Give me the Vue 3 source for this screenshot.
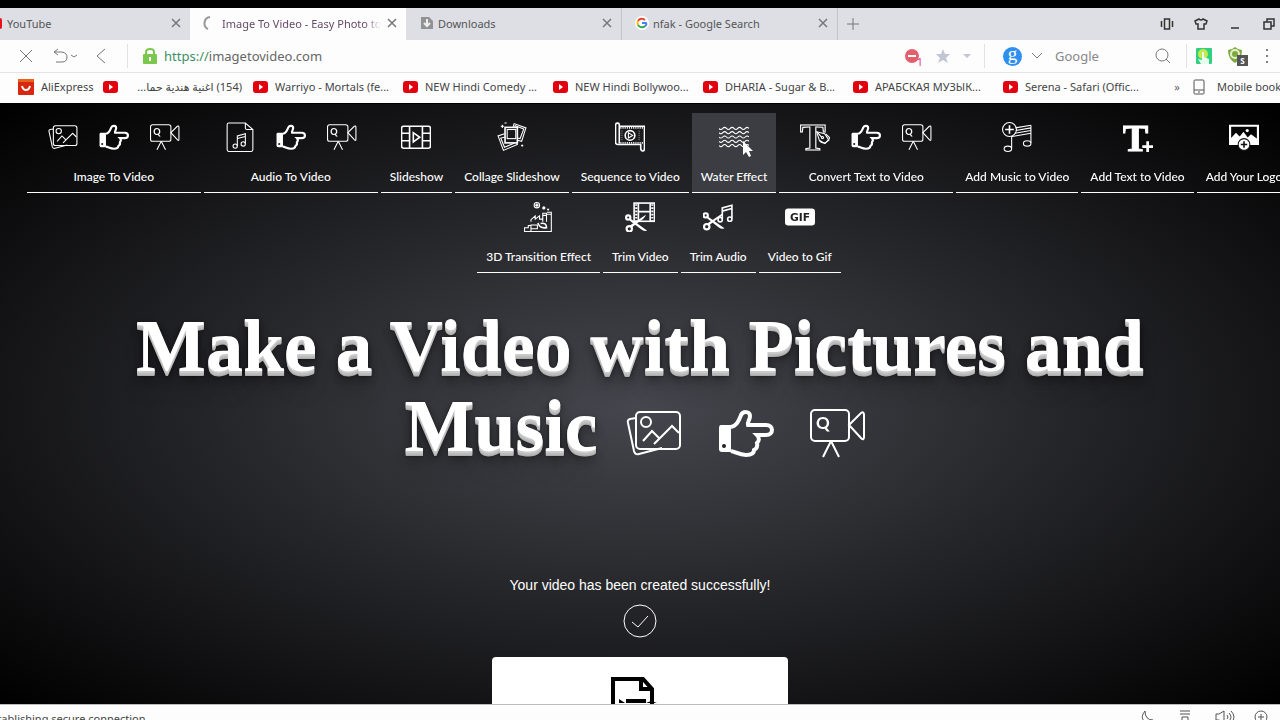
<template>
  <div class="browser">
    <svg class="sprite" aria-hidden="true">
      <symbol id="pictures" viewBox="0 0 56 56">
        <path d="M10 13 4 14Q1 15 2 18L8 46Q9 50 13 49L36 43" />
        <rect x="10" y="7" width="44" height="37" rx="4" />
        <circle cx="20" cy="17" r="5" />
        <path d="M17 36 26 26 33 33M28 39 46 21 53 28" />
      </symbol>
      <symbol id="hand" viewBox="0 0 56 56">
        <path class="solid" d="M3 20H13V47H4Q1 47 1 44V23Q1 20 3 20Z" />
        <path class="thick" d="M13 22C19 21 21 15 23 10C25 6 32 6 32 11C32 15 29 17 30 20H48C56 20 56 30 48 30H39C42 33 41 36 39 38C40 42 38 44 36 45C36 49 33 50 28 50C21 50 18 47 13 46" />
        <circle class="hole" cx="6" cy="41" r="2" />
      </symbol>
      <symbol id="camera" viewBox="0 0 56 56">
        <rect x="1" y="5" width="38" height="31" rx="4" />
        <path d="M39 20 51 8Q54 6 54 10V32Q54 36 51 33ZM21 36 13 52M21 36 29 52" />
        <text class="glyph" x="6" y="24" font-size="17" font-weight="700">Q</text>
      </symbol>
      <symbol id="audio" viewBox="0 0 56 56">
        <path d="M38 2H7Q4 2 4 5V52Q4 55 7 55H49Q52 55 52 52V14ZM38 2V11Q38 14 41 14H52" />
        <path d="M23 45V26L38 22V40M23 31 38 27" />
        <ellipse cx="19" cy="45" rx="4" ry="4" /><ellipse cx="34" cy="41" rx="4" ry="4" />
      </symbol>
      <symbol id="film" viewBox="0 0 56 56">
        <rect class="mid" x="1" y="8" width="54" height="41" rx="4" />
        <path class="mid" d="M16 8V49M40 8V49M1 21H16M1 35H16M40 21H55M40 35H55M23 20V37L35 28.500Z" />
      </symbol>
      <symbol id="collage" viewBox="0 0 56 56">
        <path d="M30 9 32 3 54 11 46 36 38 34M33 9 34 7 50 13 43 31 38 30M14 22 2 26 12 53 38 42 37 39M16 28 7 30 14 47 33 39" />
        <rect class="mid" x="15" y="10" width="23" height="29" />
        <rect x="19" y="14" width="16" height="17" />
        <path d="M7 8H13M10 5V11M14 2H18M45 44H49M47 42V46" />
      </symbol>
      <symbol id="sequence" viewBox="0 0 56 56">
        <path class="mid" d="M8 40V5Q8 2 5 2Q1 2 1 6V38Q1 42 5 42H48V49Q48 54 52 54Q55 54 55 49V8H8" />
        <path class="perf" d="M10 11H53M10 39H53" />
        <path class="dots" d="M13 16V35M45 16V35" />
        <circle class="mid" cx="28" cy="25" r="9" />
        <path d="M25 20V30L33 25Z" />
      </symbol>
      <symbol id="water" viewBox="0 0 56 56">
        <path v-for="y in [12, 20, 28, 36, 44]" :key="y" :d="wave(y)" />
      </symbol>
      <symbol id="text" viewBox="0 0 56 56">
        <text class="outline" x="0" y="53" font-size="72">T</text>
        <path class="pen" d="M31 18 46 22 54 34 46 40 36 34Z" />
        <path d="M32 19 41 29M48 22 56 30M36 34Q39 40 47 39M56 30 46 41" />
        <circle cx="42" cy="29" r="2" />
      </symbol>
      <symbol id="music" viewBox="0 0 56 56">
        <circle cx="14" cy="14" r="13" />
        <path class="mid" d="M14 6V22M6 14H22" />
        <path d="M18 26V49M54 6V39M25 11 54 6M26 16 54 11M24 21 54 16M19 27 54 21" />
        <ellipse cx="11" cy="50" rx="7" ry="5" /><ellipse cx="47" cy="40" rx="7" ry="5" />
      </symbol>
      <symbol id="addtext" viewBox="0 0 56 56">
        <text class="heavy" x="-1" y="54" font-size="72">T</text>
        <path class="plus" d="M46 36V56M36 46H56" />
      </symbol>
      <symbol id="logo" viewBox="0 0 56 56">
        <path class="solid" d="M0 5H56V43H0ZM4 9V30L13 20 20 27 27 18 35 29 41 23 52 31V9Z" fill-rule="evenodd" />
        <circle class="solid" cx="34" cy="16" r="3" />
        <circle class="disc" cx="28" cy="42" r="11" />
        <path class="dark" d="M28 36V48M22 42H34" />
      </symbol>
      <symbol id="factory" viewBox="0 0 56 56">
        <path d="M13 37V33L21 26V32L29 26V32H35M35 37V21H42V37M43 19H51V55H13M35 25H42M43 23H51M13 46V55H1V48H8V44H13M13 43H25V50H13Z" />
        <path class="mid" d="M24 3V9M21 6H27M26 39Q29 50 42 48Q42 38 31 40" />
        <circle cx="24" cy="6" r="5" /><circle class="solid" cx="37" cy="11" r="3" /><circle class="solid" cx="45" cy="14" r="2" />
      </symbol>
      <symbol id="trimvideo" viewBox="0 0 56 56">
        <rect class="mid" x="17" y="2" width="38" height="34" />
        <path class="mid" d="M25 2V36M47 2V36M25 18H47" />
        <path class="perf wide" d="M21 4V36M51 4V36" />
        <use href="#scissors" />
      </symbol>
      <symbol id="trimaudio" viewBox="0 0 56 56">
        <path class="mid" d="M36 32V11L54 6V31M36 17 54 12" />
        <ellipse class="mid" cx="32" cy="33" rx="4" ry="4" /><ellipse class="mid" cx="50" cy="32" rx="4" ry="4" />
        <g transform="translate(-1 -4)"><use href="#scissors" /></g>
      </symbol>
      <g id="scissors">
        <path class="solid" d="M10 31 41 53Q36 56 30 51L9 35ZM9 44 39 24Q37 31 29 35L13 47Z" />
        <circle class="thick" cx="6" cy="29" r="4" /><circle class="thick" cx="8" cy="50" r="5" />
      </g>
      <symbol id="gif" viewBox="0 0 56 56">
        <rect class="solid" x="0" y="12" width="56" height="32" rx="6" />
        <text class="gif" x="28" y="35" font-size="20" text-anchor="middle">GIF</text>
      </symbol>
    </svg>

    <header>
      <div class="tabs">
        <div v-for="tab in tabs" :key="tab.title" :class="['tab', tab.kind]">
          <svg v-if="tab.kind === 'youtube'" class="favicon" viewBox="0 0 3 14"><rect x="-10" y="2" width="12" height="11" rx="2" fill="#e8121b" /></svg>
          <svg v-else-if="tab.kind === 'active'" class="favicon" viewBox="0 0 14 14"><path d="M8 1C1 2 1 11 6 13" fill="none" stroke="#999" stroke-width="2" /></svg>
          <svg v-else-if="tab.kind === 'downloads'" class="favicon" viewBox="0 0 14 14"><path d="M1 1H9L13 5V13H1Z" fill="#929292" /><path d="M7 3V10M4 7 7 10 10 7" fill="none" stroke="#eee" stroke-width="2" /></svg>
          <svg v-else class="favicon" viewBox="0 0 14 14">
            <circle cx="7" cy="7" r="7" fill="#fff" />
            <g class="ring"><path d="M10 4A4.500 4.500 0 0 0 3 5" stroke="#ea4335" /><path d="M3 5A4.500 4.500 0 0 0 3 9" stroke="#fbbc05" /><path d="M3 9A4.500 4.500 0 0 0 10 10" stroke="#34a853" /><path d="M10 10Q12 9 11 7H7" stroke="#4285f4" /></g>
          </svg>
          <span class="title">{{ tab.title }}</span>
          <button class="close" aria-label="Close tab"><svg viewBox="0 0 10 10"><path d="M1 1 9 9M9 1 1 9" /></svg></button>
        </div>
        <button class="newtab" aria-label="New tab"><svg viewBox="0 0 14 14"><path d="M7 1V13M1 7H13" /></svg></button>
        <div class="controls">
          <button aria-label="Compact"><svg viewBox="0 0 14 14"><path d="M4.500 2H9.500V12H4.500ZM1.500 4V10M12.500 4V10" /></svg></button>
          <button aria-label="Skins"><svg viewBox="0 0 14 14"><path d="M5 2Q7 4 9 2L13 4 12 7 10 7V12H4V7L2 7 1 4Z" /></svg></button>
          <button aria-label="Minimize"><svg viewBox="0 0 14 14"><path d="M3 11H11" /></svg></button>
          <button aria-label="Restore"><svg viewBox="0 0 14 14"><path d="M2 5H9V12H2ZM5 5V2H12V9H9" /></svg></button>
        </div>
      </div>

      <div class="toolbar">
        <button class="stop" aria-label="Stop"><svg viewBox="0 0 18 18"><path d="M3 3 15 15M15 3 3 15" /></svg></button>
        <button class="undo" aria-label="Undo"><svg viewBox="0 0 26 18"><path d="M6 2 2 5 6 8M2 5H10Q15 6 15 10Q15 15 10 15H4M19 8 22 10 25 8" /></svg></button>
        <button class="back" aria-label="Back"><svg viewBox="0 0 16 18"><path d="M12 2 4 9 12 16" /></svg></button>
        <i class="divider"></i>
        <svg class="lock" viewBox="0 0 14 18"><path d="M3 8V5Q3 2 7 2Q11 2 11 5V8" fill="none" stroke="#7cc84f" stroke-width="2" /><rect y="7" width="14" height="10" rx="1" fill="#7cc84f" /><path d="M7 10V14" stroke="#fff" stroke-width="2" /></svg>
        <label class="address"><span class="secure">https://</span><input v-model="host" aria-label="Address" /></label>
        <div class="blocked">
          <svg viewBox="0 0 16 16"><circle cx="8" cy="8" r="7" fill="#e2606d" /><path d="M4 8H12" stroke="#fff" stroke-width="2" /></svg>
          <span class="count">1</span>
        </div>
        <svg class="star" viewBox="0 0 16 16"><path d="M8 1 10 6 15 6 11 10 13 15 8 12 3 15 5 10 1 6 6 6Z" fill="#c3c5d2" /></svg>
        <svg class="caret" viewBox="0 0 8 8"><path d="M0 2H8L4 6Z" fill="#c3c5d2" /></svg>
        <i class="divider"></i>
        <span class="engine">g</span>
        <svg class="chevron" viewBox="0 0 12 12"><path d="M1 3 6 8 11 3" /></svg>
        <input class="search" placeholder="Google" aria-label="Search" />
        <svg class="magnifier" viewBox="0 0 16 16"><circle cx="7" cy="7" r="6" /><path d="M11 11 15 15" /></svg>
        <i class="divider"></i>
        <svg class="touch" viewBox="0 0 16 16"><rect width="16" height="16" rx="1" fill="#2fd080" /><circle cx="7" cy="6" r="5" fill="#c5e94a" /><path d="M6 4H8V9L13 11V16H5L2 11 6 12Z" fill="#e8fff0" /></svg>
        <div class="shield">
          <svg viewBox="0 0 18 18"><path d="M1 3Q5 3 8 0Q11 3 15 3Q15 12 8 16Q1 12 1 3Z" fill="#7ea93f" /><circle cx="8" cy="7" r="4" fill="none" stroke="#e5f2c8" stroke-width="2" /></svg>
          <span class="score">S</span>
        </div>
        <svg class="menu" viewBox="0 0 4 16"><circle cx="2" cy="2" r="1" /><circle cx="2" cy="8" r="1" /><circle cx="2" cy="14" r="1" /></svg>
      </div>

      <nav class="bookmarks" aria-label="Bookmarks">
        <i class="divider"></i>
        <a href="#" class="ali"><svg viewBox="0 0 16 16"><rect width="16" height="16" rx="1" fill="#d8260f" /><rect width="16" height="3" fill="#e8641e" /><path d="M4 7Q5 11 8 11Q11 11 12 7" fill="none" stroke="#fff" stroke-width="2" /></svg>AliExpress</a>
        <a v-for="mark in bookmarks" :key="mark" href="#" class="mark">
          <svg viewBox="0 0 15 12"><rect width="15" height="12" rx="3" fill="#e2000f" /><path d="M6 3V9L10 6Z" fill="#fff" /></svg>
          <span :dir="mark.startsWith('(154)') ? 'rtl' : 'ltr'">{{ mark }}</span>
        </a>
        <button class="more">»</button>
        <a href="#" class="mobile"><svg viewBox="0 0 12 16"><rect x="1" y="1" width="10" height="14" rx="1" /><path d="M1 11H11M5 13H7" /></svg>Mobile bookmarks</a>
      </nav>
    </header>

    <main>
      <nav class="tools" aria-label="Tools">
        <a v-for="tool in tools" :key="tool.name" href="#" :class="['tool', { hovered: tool.hovered, trio: tool.icons.length > 1 }]">
          <span class="icons">
            <svg v-for="icon in tool.icons" :key="icon" class="icon"><use :href="'#' + icon" /></svg>
          </span>
          {{ tool.name }}
          <svg v-if="tool.hovered" class="cursor" viewBox="0 0 12 18"><path d="M1 1V15L4 12 7 17 9 16 7 11H11Z" fill="#fff" /></svg>
        </a>
      </nav>

      <h1>
        Make a Video with Pictures and
        <span class="last">Music<svg v-for="icon in trio" :key="icon" class="icon"><use :href="'#' + icon" /></svg></span>
      </h1>

      <section class="result">
        <p>Your video has been created successfully!</p>
        <svg class="check" viewBox="0 0 34 34"><circle cx="17" cy="17" r="16" /><path d="M9 18 15 23 25 12" /></svg>
        <div class="card">
          <svg viewBox="0 0 58 50"><path class="sheet" d="M2 49V2H32L41 12V49M30 2V12H41" /><path d="M8 22 14 26H8ZM15 22H35V26H15ZM35 26 40 24 46 26Z" /></svg>
        </div>
      </section>
    </main>

    <footer>
      <span class="status">Establishing secure connection...</span>
      <svg viewBox="0 0 16 16"><path d="M6 2Q1 8 5 12Q9 16 14 11Q6 11 6 2Z" /></svg>
      <svg viewBox="0 0 16 16"><path d="M3 2H13M3 5H13M5 8H11V12H14L8 17 2 12H5Z" /></svg>
      <svg class="sound" viewBox="0 0 20 16"><path d="M1 5H4L9 2V14L4 11H1ZM12 6Q14 8 12 10M14 4Q18 8 14 12M16 2Q22 8 16 14" /></svg>
      <svg viewBox="0 0 16 16"><circle cx="8" cy="8" r="6" /><path d="M8 5V11M5 8H11" /></svg>
    </footer>
  </div>
</template>

<script setup>
import { ref } from 'vue'

const host = ref('imagetovideo.com')

const tabs = [
  { title: 'YouTube', kind: 'youtube' },
  { title: 'Image To Video - Easy Photo to Video', kind: 'active' },
  { title: 'Downloads', kind: 'downloads' },
  { title: 'nfak - Google Search', kind: 'google' },
]

const bookmarks = [
  '(154) اغنية هندية حما...',
  'Warriyo - Mortals (fe...',
  'NEW Hindi Comedy ...',
  'NEW Hindi Bollywoo...',
  'DHARIA - Sugar & B...',
  'АРАБСКАЯ МУЗЫК...',
  'Serena - Safari (Offic...',
]

const trio = ['pictures', 'hand', 'camera']

const tools = [
  { name: 'Image To Video', icons: trio },
  { name: 'Audio To Video', icons: ['audio', 'hand', 'camera'] },
  { name: 'Slideshow', icons: ['film'] },
  { name: 'Collage Slideshow', icons: ['collage'] },
  { name: 'Sequence to Video', icons: ['sequence'] },
  { name: 'Water Effect', icons: ['water'], hovered: true },
  { name: 'Convert Text to Video', icons: ['text', 'hand', 'camera'] },
  { name: 'Add Music to Video', icons: ['music'] },
  { name: 'Add Text to Video', icons: ['addtext'] },
  { name: 'Add Your Logo', icons: ['logo'] },
  { name: '3D Transition Effect', icons: ['factory'] },
  { name: 'Trim Video', icons: ['trimvideo'] },
  { name: 'Trim Audio', icons: ['trimaudio'] },
  { name: 'Video to Gif', icons: ['gif'] },
]

// one line of ripples for the water icon
function wave(y) {
  return `M0 ${y}` + 'q3.500 4 7 0q3.500 -4 7 0'.repeat(4)
}
</script>

<style>
body {
  margin: 0;
  background: #000;
  overflow: hidden;
}
</style>

<style scoped>
.browser {
  display: flex;
  flex-direction: column;
  height: 100vh;
  padding-top: 8px;
  box-sizing: border-box;
  overflow: hidden;
  font-family: "Noto Sans", "Open Sans", "DejaVu Sans", sans-serif;
  font-size: 11px;
  color: #444;
}

.sprite {
  display: none;
}

button {
  display: flex;
  align-items: center;
  justify-content: center;
  border: none;
  padding: 0;
  background: none;
  color: inherit;
  font: inherit;
}

input {
  border: none;
  outline: none;
  padding: 0;
  min-width: 0;
  background: none;
  font: inherit;
  color: inherit;
}

a {
  color: inherit;
  text-decoration: none;
  white-space: nowrap;
}

svg {
  flex: none;
}

header {
  flex: none;
  background: #fdfdfe;
  border-bottom: 1px solid #000;
}

.tabs {
  display: flex;
  height: 32px;
  background: #dddfe5;
  color: #555;
}

.tab {
  display: flex;
  align-items: center;
  flex: none;
  box-sizing: border-box;
  width: 216px;
  padding: 0 9px 2px 14px;
  gap: 4px;
}

.tab.youtube {
  width: 190px;
  padding-left: 0;
}

.tab.youtube .favicon {
  width: 3px;
}

.tab.active {
  background: #fdfdfe;
  padding-left: 12px;
  gap: 6px;
  color: #654a65;
}

.tab.downloads,
.tab.google {
  border-right: 1px solid #c2c4c9;
}

.tab.google {
  padding-left: 13px;
}

.favicon {
  width: 14px;
  height: 14px;
}

.ring {
  fill: none;
  stroke-width: 2;
}

.title {
  flex: 1;
  overflow: hidden;
  white-space: nowrap;
}

.active .title {
  mask-image: linear-gradient(to right, #000 90%, transparent);
}

.tabs svg,
.toolbar svg,
.mobile svg,
footer svg {
  fill: none;
  stroke-width: 1;
}

.close svg {
  width: 10px;
  height: 10px;
  stroke: #777;
}

.tabs .close svg,
.tabs .controls svg {
  stroke-width: 1.5;
}

.newtab {
  width: 30px;
}

.newtab svg {
  width: 14px;
  stroke: #777;
}

.controls {
  display: flex;
  align-items: center;
  gap: 20px;
  margin-left: auto;
  padding-right: 4px;
}

.controls svg {
  width: 14px;
  height: 14px;
  stroke: #333;
}

.toolbar {
  display: flex;
  align-items: center;
  height: 32px;
  border-bottom: 1px solid #e4e4e8;
  font-size: 13px;
  color: #666;
}

.toolbar button svg,
.chevron,
.magnifier {
  stroke: #777;
}

.toolbar .divider {
  width: 1px;
  height: 24px;
  background: #e2e2e6;
}

.stop {
  margin-left: 17px;
}

.stop svg {
  width: 18px;
}

.undo {
  margin-left: 17px;
}

.undo svg {
  width: 26px;
}

.back {
  margin: 0 18px 0 15px;
}

.back svg {
  width: 16px;
}

.lock {
  width: 14px;
  height: 18px;
  margin: 0 7px 0 15px;
}

.address {
  display: flex;
  flex: 1;
}

.address input {
  flex: 1;
}

.secure {
  color: #3b9063;
}

.blocked {
  position: relative;
  width: 16px;
  height: 16px;
}

.count {
  position: absolute;
  left: 13px;
  top: 8px;
  font-size: 10px;
  line-height: 12px;
  color: #d9348a;
}

.star {
  width: 16px;
  margin: 0 12px 0 15px;
}

.caret {
  width: 8px;
  margin-right: 13px;
}

.engine {
  width: 19px;
  height: 19px;
  margin: 0 9px 0 18px;
  border-radius: 50%;
  background: #2f8fee;
  color: #fff;
  font-family: "Liberation Serif", serif;
  font-size: 19px;
  line-height: 14px;
  text-align: center;
}

.chevron {
  width: 12px;
  margin-right: 12px;
}

.search {
  width: 100px;
}

.search::placeholder {
  color: #888;
  opacity: 1;
}

.magnifier {
  width: 16px;
  margin-right: 15px;
}

.touch {
  width: 16px;
  margin: 0 15px 0 9px;
}

.shield {
  position: relative;
  width: 20px;
  height: 18px;
}

.shield svg {
  width: 18px;
  height: 18px;
}

.score {
  position: absolute;
  left: 10px;
  top: 8px;
  width: 11px;
  height: 11px;
  background: #555;
  color: #fff;
  font-size: 8px;
  font-weight: 700;
  line-height: 11px;
  text-align: center;
}

.toolbar .menu {
  width: 4px;
  height: 16px;
  margin: 0 11px 0 18px;
  fill: #555;
}

.bookmarks {
  display: flex;
  align-items: center;
  box-sizing: border-box;
  height: 30px;
  padding-bottom: 3px;
  overflow: hidden;
}

.bookmarks .divider {
  width: 1px;
  height: 18px;
  margin: 0 9px;
  background: #e4e4e8;
}

.ali,
.mark,
.mobile {
  display: flex;
  align-items: center;
  flex: none;
  gap: 7px;
}

.ali {
  width: 85px;
}

.ali svg {
  width: 16px;
}

.mark {
  width: 150px;
}

.mark svg {
  width: 15px;
}

.mark span {
  width: 117px;
}

.more {
  flex: none;
  width: 40px;
  padding-left: 8px;
  box-sizing: border-box;
  color: #666;
}

.mobile {
  gap: 12px;
}

.mobile svg {
  width: 12px;
  stroke: #555;
}

main {
  flex: 1;
  min-height: 0;
  overflow: hidden;
  background: radial-gradient(ellipse at center, #46474e 0%, #000 100%);
  color: #fff;
}

.tools {
  display: flex;
  flex-wrap: wrap;
  justify-content: center;
  column-gap: 3px;
  margin: 9px -38px 0 0;
  font-family: Lato, sans-serif;
  font-size: 12px;
  font-weight: 500;
}

.tool {
  position: relative;
  display: flex;
  flex-direction: column;
  align-items: center;
  box-sizing: border-box;
  height: 80px;
  padding: 9px 9px 0;
  line-height: 18px;
  border-bottom: 1px solid #fff;
}

.tool.trio {
  width: 174px;
}

.tool.hovered {
  background: #3c3d43;
}

.icons {
  display: flex;
  gap: 21px;
  margin-bottom: 16px;
}

.icon {
  width: 30px;
  height: 30px;
  fill: none;
  stroke: currentColor;
  stroke-width: 2;
  will-change: transform;
}

.cursor {
  position: absolute;
  left: 50px;
  top: 27px;
  width: 12px;
  height: 18px;
}

.solid {
  fill: currentColor;
  stroke: none;
}

.thick {
  stroke-width: 4;
}

.mid {
  stroke-width: 3;
}

.hole {
  fill: #222;
  stroke: none;
}

.perf {
  stroke-width: 3;
  stroke-dasharray: 2 2;
}

.dots {
  stroke-width: 1;
  stroke-dasharray: 2 2;
}

.wide {
  stroke-width: 4;
  stroke-dasharray: 3 3;
}

.glyph {
  fill: currentColor;
  stroke: none;
  font-family: Lato, sans-serif;
}

.outline {
  font-family: "Liberation Serif", serif;
  font-weight: 700;
}

.heavy {
  fill: currentColor;
  font-family: "Liberation Serif", serif;
  font-weight: 700;
}

.pen {
  fill: #17181a;
}

.plus {
  stroke-width: 5;
}

.disc {
  fill: #fff;
  stroke: #111;
}

.dark {
  stroke: #111;
  stroke-width: 3;
}

.gif {
  fill: #222;
  stroke: none;
  font-family: "DejaVu Sans", sans-serif;
  font-weight: 700;
}

h1 {
  margin: 33px 0 0;
  padding: 0 40px;
  font-family: "Liberation Serif", serif;
  font-size: 74px;
  line-height: 80px;
  text-align: center;
  text-shadow:
    0 1px 0 #ccc,
    0 2px 0 #c9c9c9,
    0 3px 0 #bbb,
    0 4px 0 #b9b9b9,
    0 5px 0 #aaa,
    0 6px 1px rgba(0, 0, 0, 0.1),
    0 1px 3px rgba(0, 0, 0, 0.3),
    0 3px 5px rgba(0, 0, 0, 0.2),
    0 5px 10px rgba(0, 0, 0, 0.25),
    0 10px 10px rgba(0, 0, 0, 0.2),
    0 20px 20px rgba(0, 0, 0, 0.15);
}

.last {
  padding-right: 10px;
  white-space: nowrap;
}

h1 .icon {
  width: 56px;
  height: 56px;
  margin-left: 36px;
  vertical-align: -10px;
  text-shadow: none;
}

h1 .icon:first-child {
  margin-left: 28px;
}

.result {
  display: flex;
  flex-direction: column;
  align-items: center;
  margin-top: 108px;
}

.result p {
  margin: 0 0 8px;
  font-family: "Liberation Sans", Arial, sans-serif;
  font-size: 14px;
  line-height: 22px;
}

.check {
  width: 34px;
  height: 34px;
  margin-bottom: 19px;
  fill: none;
  stroke: #fff;
}

.card {
  display: flex;
  justify-content: center;
  box-sizing: border-box;
  width: 296px;
  padding: 20px 0;
  border-radius: 4px;
  background: #fff;
}

.card svg {
  width: 58px;
  height: 50px;
}

.sheet {
  fill: none;
  stroke: #000;
  stroke-width: 4;
}

footer {
  display: flex;
  flex: none;
  align-items: flex-start;
  gap: 22px;
  height: 15px;
  padding-right: 11px;
  overflow: hidden;
  border-top: 1px solid #bbb;
  background: #fdfdfe;
}

footer svg {
  width: 16px;
  height: 16px;
  margin-top: 4px;
  stroke: #555;
}

footer .sound {
  width: 20px;
  margin-right: -4px;
}

.status {
  flex: 1;
  margin: 5px 0 0 -14px;
  line-height: 18px;
  white-space: nowrap;
}
</style>
